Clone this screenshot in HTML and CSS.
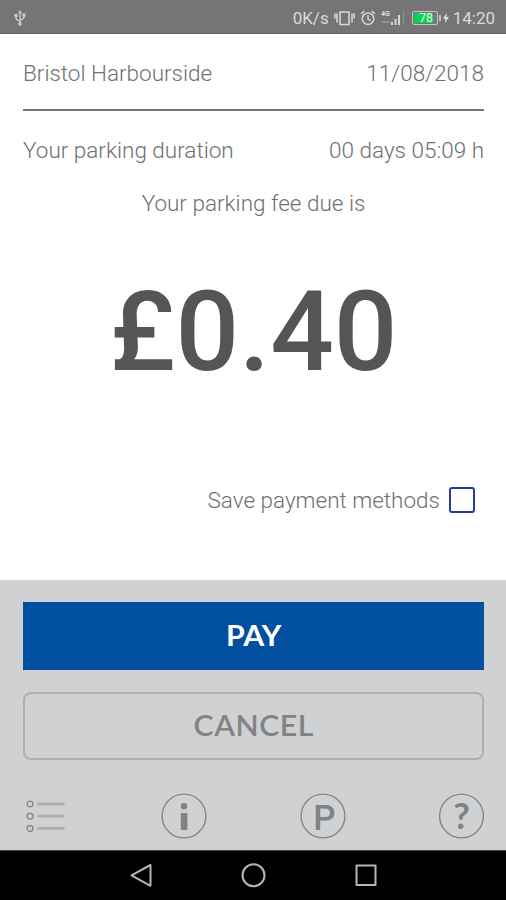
FILE: index.html
```html
<!DOCTYPE html>
<html lang="en">
  <head>
    <meta charset="UTF-8" />
    <meta name="viewport" content="width=device-width, initial-scale=1.0" />
    <title>Parking payment</title>
    <link rel="stylesheet" href="styles.css">
  </head>
  <body>
    <div class="status-bar">
      <svg class="usb" width="12" height="16" viewBox="0 0 12 16">
        <path d="M6 2v12M2 5v3q0 2 4 3M10 5v2q0 2-4 3" fill="none" stroke="#d0d0d0" stroke-width="1.3" />
        <path d="M6 0l2 3.5H4zM.5 4h3v3h-3zM8.5 3.5h3v3h-3z" fill="#d0d0d0" />
        <circle cx="6" cy="14" r="1.8" fill="#d0d0d0" />
      </svg>
      <div class="status-icons">
        <span class="speed">0K/s</span>
        <svg class="vibrate" width="21" height="16" viewBox="0 0 21 16">
          <path d="M6 2h9v12.5h-9zM3 3.5v9M18 3.5v9M0.8 3.5v5M20.2 3.5v5" fill="none" stroke="#d6d6d6" stroke-width="1.6" />
        </svg>
        <svg class="alarm" width="16" height="16" viewBox="0 0 16 16">
          <circle cx="8" cy="8.7" r="5.8" />
          <path d="M1 4l3.3-3M15 4l-3.3-3M8 5.3v3.8l2.7 1.5" />
        </svg>
        <svg class="signal" width="24" height="16" viewBox="0 0 24 16">
          <text x="0" y="6">4G</text>
          <path d="M1 12h8" stroke="#8f8f8f" stroke-width="2" />
          <path d="M11 12v3M14.5 9v6M18 5v10" stroke="#d6d6d6" stroke-width="2" />
          <path d="M22.5 1v14" stroke="#8f8f8f" stroke-width="1.5" />
        </svg>
        <div class="battery"><span>78</span></div>
        <svg class="bolt" width="6" height="10" viewBox="0 0 6 10">
          <path d="M3.5 0L0 5.7h2.3L2 10l4-6H3.5z" fill="#ddd" />
        </svg>
        <span class="time">14:20</span>
      </div>
    </div>

    <main class="details">
      <div class="row place-row">
        <span class="place">Bristol Harbourside</span>
        <span class="date">11/08/2018</span>
      </div>
      <div class="row duration-row">
        <span class="duration-label">Your parking duration</span>
        <span class="duration">00 days 05:09 h</span>
      </div>
      <p class="fee-label">Your parking fee due is</p>
      <div class="fee">£0.40</div>
      <label class="save">
        <span>Save payment methods</span>
        <input type="checkbox" class="checkbox" />
      </label>
    </main>

    <section class="actions">
      <button class="btn pay"><span>PAY</span></button>
      <button class="btn cancel"><span>CANCEL</span></button>
      <nav class="menu">
        <svg width="46" height="46" viewBox="0 0 46 46" class="list-icon">
          <g fill="none" stroke="#858688" stroke-width="1.4">
            <circle cx="7" cy="11" r="2.9" />
            <circle cx="7" cy="23.2" r="2.9" />
            <circle cx="7" cy="35.4" r="2.9" />
          </g>
          <path d="M14.5 11h27M14.5 23.2h27M14.5 35.4h27" stroke="#acadae" stroke-width="2.8" />
        </svg>
        <svg width="46" height="46" viewBox="0 0 46 46">
          <circle cx="23" cy="23" r="21.9" class="ring" />
          <circle cx="23" cy="13.2" r="3.2" fill="#818284" />
          <path d="M19.8 20h6.6v17h-6.6z" fill="#818284" />
        </svg>
        <svg width="46" height="46" viewBox="0 0 46 46">
          <circle cx="23" cy="23" r="21.9" class="ring" />
          <text x="24.5" y="36.5" class="letter parking">P</text>
        </svg>
        <svg width="46" height="46" viewBox="0 0 46 46">
          <circle cx="23.5" cy="23" r="21.9" class="ring" />
          <text x="23.5" y="36" class="letter">?</text>
        </svg>
      </nav>
    </section>

    <footer class="nav-bar">
      <svg width="26" height="26" viewBox="0 0 26 26">
        <path d="M23.5 2v20.8L4.5 12.4z" />
      </svg>
      <svg width="26" height="26" viewBox="0 0 26 26">
        <circle cx="13.5" cy="12.3" r="11" />
      </svg>
      <svg width="26" height="26" viewBox="0 0 26 26">
        <path d="M3.5 2.5h19v19.5h-19z" />
      </svg>
    </footer>
  </body>
</html>
```
FILE: styles.css
```css
* {
  box-sizing: border-box;
}
body {
  margin: 0;
  height: 900px;
  display: flex;
  flex-direction: column;
  overflow: hidden;
  background-color: #fff;
  color: #707070;
  font-family: Roboto, sans-serif;
}
.status-bar {
  height: 34px;
  padding: 2px 11px 0 14px;
  display: flex;
  justify-content: space-between;
  align-items: center;
  background-color: #757575;
  border-bottom: 1px solid #606060;
  color: #dadada;
  font-size: 17px;
}
.status-icons {
  display: flex;
  align-items: center;
}
.vibrate {
  margin-left: 5px;
}
.alarm {
  margin-left: 5px;
  fill: none;
  stroke: #d6d6d6;
  stroke-width: 1.5;
}
.signal {
  margin-left: 5px;
  font-size: 7px;
  font-weight: bold;
  fill: #dadada;
}
.battery {
  position: relative;
  margin-left: 7px;
  width: 26px;
  height: 14px;
  padding: 1px;
  border: 1px solid #c4c4c4;
  border-radius: 2px;
}
.battery::after {
  content: "";
  position: absolute;
  right: -4px;
  top: 3px;
  width: 2px;
  height: 6px;
  background-color: #c4c4c4;
}
.battery span {
  display: block;
  width: 19px;
  height: 10px;
  background-color: #0ad353;
  color: #e4ffe9;
  font-size: 12px;
  line-height: 11px;
  text-align: right;
}
.bolt {
  margin-left: 5px;
  margin-right: 4px;
}
.details {
  height: 546px;
  padding: 0 22px 0 23px;
  font-size: 22.5px;
  font-weight: 300;
}
.row {
  display: flex;
  justify-content: space-between;
  align-items: center;
}
.place-row {
  height: 77px;
  padding-top: 3px;
  border-bottom: 2px solid #757373;
}
.duration-row {
  height: 77px;
}
.fee-label {
  margin: 0;
  line-height: 30px;
  text-align: center;
}
.fee {
  margin-top: 48px;
  color: #555;
  font-size: 112px;
  font-weight: 500;
  line-height: 132px;
  text-align: center;
}
.save {
  margin-top: 88px;
  padding-right: 9px;
  display: flex;
  justify-content: flex-end;
  align-items: center;
  gap: 9px;
}
.save span {
  padding-top: 1px;
}
.checkbox {
  appearance: none;
  margin: 0;
  width: 26px;
  height: 26px;
  border: 2px solid #213e99;
  border-radius: 3px;
}
.actions {
  height: 270px;
  padding: 22px 22px 0 23px;
  background-color: #d0d1d3;
}
.btn {
  display: block;
  width: 100%;
  height: 68px;
  padding: 0 0 2px;
  border: none;
  font-family: Lato, sans-serif;
  font-size: 28px;
  font-weight: bold;
}
/* wide capitals */
.btn span {
  display: inline-block;
  transform: scaleX(1.08);
}
.pay {
  background-color: #00509f;
  color: #fff;
}
.cancel {
  margin-top: 22px;
  background-color: transparent;
  border: 2px solid #afb0b1;
  border-radius: 8px;
  color: #828384;
  font-weight: 600;
  letter-spacing: 0.5px;
}
.menu {
  margin-top: 33px;
  display: flex;
  justify-content: space-between;
}
.ring {
  fill: none;
  stroke: #858688;
  stroke-width: 1.4;
}
.letter {
  fill: #818284;
  font-family: Lato, sans-serif;
  font-size: 36px;
  font-weight: bold;
  text-anchor: middle;
}
.parking {
  font-family: Roboto, sans-serif;
  font-weight: 500;
  font-size: 35px;
}
.nav-bar {
  height: 50px;
  display: flex;
  justify-content: center;
  align-items: center;
  gap: 87px;
  background-color: #000;
  border-top: 1px solid #444;
}
.nav-bar svg {
  fill: none;
  stroke: #b5b5b5;
  stroke-width: 2;
  stroke-linejoin: round;
}
```
